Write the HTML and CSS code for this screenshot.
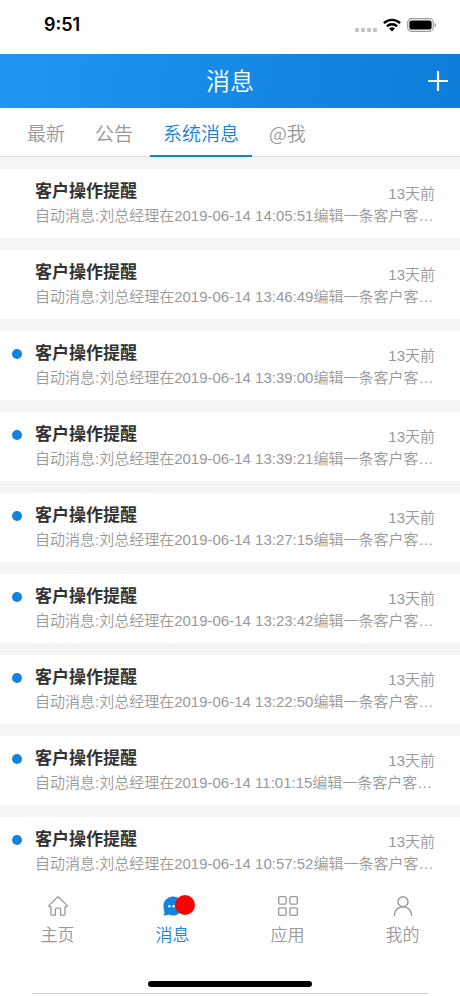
FILE: index.html
```html
<!DOCTYPE html>
<html lang="zh-CN">
<head>
  <meta charset="UTF-8" />
  <meta name="viewport" content="width=device-width, initial-scale=1" />
  <title>消息</title>
  <link rel="stylesheet" href="styles.css">
</head>
<body>

  <div class="status-bar">
    <span class="clock">9:51</span>
    <div class="status-icons">
      <svg width="22" height="16" viewBox="0 0 22 16" fill="#c4c4c4">
        <rect x="0" y="11" width="4" height="4" rx="1" />
        <rect x="6" y="11" width="4" height="4" rx="1" />
        <rect x="12" y="11" width="4" height="4" rx="1" />
        <rect x="18" y="11" width="4" height="4" rx="1" />
      </svg>
      <svg width="18" height="14" viewBox="0 0 18 14" fill="none" stroke="#000" stroke-width="2.4">
        <path d="M0.9 5.2C5.4 0.7 12.6 0.7 17.1 5.2" />
        <path d="M3.9 8.3C6.8 5.5 11.2 5.5 14.1 8.3" />
        <path d="M9 13.4L6 10.4C7.7 8.9 10.3 8.9 12 10.4Z" fill="#000" stroke="none" />
      </svg>
      <svg width="30" height="14" viewBox="0 0 30 14">
        <rect x="0.7" y="0.7" width="25.6" height="12.6" rx="3.8" fill="none" stroke="#9a9a9a" stroke-width="1.2" />
        <rect x="2.4" y="2.4" width="22.2" height="9.2" rx="2.2" fill="#000" />
        <path d="M27.8 4.8C29.6 5.6 29.6 8.4 27.8 9.2Z" fill="#8a8a8a" />
      </svg>
    </div>
  </div>

  <header class="header">
    <h1>消息</h1>
    <button class="add" aria-label="新建">
      <svg width="20" height="20" viewBox="0 0 20 20" stroke="#fff" stroke-width="2.2" stroke-linecap="round">
        <path d="M10 1V19M1 10H19" />
      </svg>
    </button>
  </header>

  <nav class="tabs">
    <a href="#">最新</a>
    <a href="#">公告</a>
    <a href="#" class="active">系统消息</a>
    <a href="#">@我</a>
  </nav>

  <main class="list">
    <article class="card">
      <h2>客户操作提醒</h2>
      <time>13天前</time>
      <p>自动消息:刘总经理在2019-06-14 14:05:51编辑一条客户客…</p>
    </article>
    <article class="card">
      <h2>客户操作提醒</h2>
      <time>13天前</time>
      <p>自动消息:刘总经理在2019-06-14 13:46:49编辑一条客户客…</p>
    </article>
    <article class="card unread">
      <h2>客户操作提醒</h2>
      <time>13天前</time>
      <p>自动消息:刘总经理在2019-06-14 13:39:00编辑一条客户客…</p>
    </article>
    <article class="card unread">
      <h2>客户操作提醒</h2>
      <time>13天前</time>
      <p>自动消息:刘总经理在2019-06-14 13:39:21编辑一条客户客…</p>
    </article>
    <article class="card unread">
      <h2>客户操作提醒</h2>
      <time>13天前</time>
      <p>自动消息:刘总经理在2019-06-14 13:27:15编辑一条客户客…</p>
    </article>
    <article class="card unread">
      <h2>客户操作提醒</h2>
      <time>13天前</time>
      <p>自动消息:刘总经理在2019-06-14 13:23:42编辑一条客户客…</p>
    </article>
    <article class="card unread">
      <h2>客户操作提醒</h2>
      <time>13天前</time>
      <p>自动消息:刘总经理在2019-06-14 13:22:50编辑一条客户客…</p>
    </article>
    <article class="card unread">
      <h2>客户操作提醒</h2>
      <time>13天前</time>
      <p>自动消息:刘总经理在2019-06-14 11:01:15编辑一条客户客…</p>
    </article>
    <article class="card unread">
      <h2>客户操作提醒</h2>
      <time>13天前</time>
      <p>自动消息:刘总经理在2019-06-14 10:57:52编辑一条客户客…</p>
    </article>
  </main>

  <footer class="bottom">
    <nav class="tabbar">
      <a href="#">
        <span class="icon">
          <svg width="20" height="20" viewBox="0 0 20 20" fill="none" stroke="#999" stroke-width="1.3" stroke-linejoin="round" stroke-linecap="round">
            <path d="M10 0.8L19.2 9.6C19.4 10.2 19 10.6 18.4 10.6H17V18C17 18.8 16.6 19.2 15.8 19.2H12.6V13.4C12.6 12.6 12.2 12.2 11.4 12.2H8.6C7.8 12.2 7.4 12.6 7.4 13.4V19.2H4.2C3.4 19.2 3 18.8 3 18V10.6H1.6C1 10.6 0.6 10.2 0.8 9.6Z" />
          </svg>
        </span>
        主页
      </a>
      <a href="#" class="active">
        <span class="icon">
          <svg width="20" height="20" viewBox="0 0 20 20">
            <path d="M10 0.4C15.4 0.4 19.6 4.7 19.6 10S15.4 19.6 10 19.6C8.4 19.6 7 19.2 5.6 18.6C4 19.4 2.2 19.6 0.5 19.3C1.2 18.3 1.4 17 1.3 15.4C0.7 13.8 0.4 12 0.4 10C0.4 4.7 4.6 0.4 10 0.4Z" fill="#1583dc" />
            <circle cx="6.4" cy="10.2" r="1.2" fill="#fff" />
            <circle cx="10.6" cy="10.2" r="1.2" fill="#fff" />
          </svg>
          <span class="badge"></span>
        </span>
        消息
      </a>
      <a href="#">
        <span class="icon">
          <svg width="20" height="20" viewBox="0 0 20 20" fill="none" stroke="#999" stroke-width="1.3">
            <rect x="0.7" y="0.7" width="7.4" height="7.4" rx="1" />
            <rect x="11.9" y="0.7" width="7.4" height="7.4" rx="1" />
            <rect x="0.7" y="11.9" width="7.4" height="7.4" rx="1" />
            <rect x="11.9" y="11.9" width="7.4" height="7.4" rx="1" />
          </svg>
        </span>
        应用
      </a>
      <a href="#">
        <span class="icon">
          <svg width="20" height="20" viewBox="0 0 20 20" fill="none" stroke="#999" stroke-width="1.4" stroke-linecap="round">
            <circle cx="10" cy="5.8" r="5" />
            <path d="M1.3 19.2C1.6 14.2 5.2 10.8 10 10.8S18.4 14.2 18.7 19.2" />
          </svg>
        </span>
        我的
      </a>
    </nav>
    <div class="home-indicator"></div>
    <div class="bottom-line"></div>
  </footer>

</body>
</html>
```

FILE: styles.css
```css
* {
  box-sizing: border-box;
}

body {
  margin: 0;
  height: 100vh;
  display: flex;
  flex-direction: column;
  overflow: hidden;
  background: #f5f5f5;
  color: #999;
  font-family: "Liberation Sans", "Noto Sans CJK SC", sans-serif;
  font-weight: 350;
}

h1, h2, p {
  margin: 0;
}

a {
  color: inherit;
  text-decoration: none;
}

svg {
  display: block;
}

/* Status bar */
.status-bar {
  flex: none;
  display: flex;
  justify-content: space-between;
  height: 54px;
  padding: 13px 23px 0 44px;
  background: #fff;
}

.clock {
  color: #000;
  font-family: Inter, sans-serif;
  font-size: 18px;
  font-weight: 600;
  line-height: 24px;
}

.status-icons {
  display: flex;
  align-items: center;
  gap: 6px;
  height: 24px;
}

/* Header */
.header {
  flex: none;
  display: grid;
  grid-template-columns: 1fr auto 1fr;
  align-items: center;
  height: 54px;
  padding: 0 12px;
  background: linear-gradient(100deg, #2196f3, #0d7dd9);
}

.header h1 {
  grid-column: 2;
  padding-top: 2px;
  color: #fff;
  font-size: 24px;
  font-weight: 350;
  line-height: 36px;
}

.add {
  justify-self: end;
  padding: 0;
  border: 0;
  background: none;
  cursor: pointer;
}

/* Tabs */
.tabs {
  flex: none;
  display: flex;
  gap: 4px;
  height: 49px;
  padding-left: 14px;
  background: #fff;
  border-bottom: 1px solid #ddd;
  font-family: "Noto Sans CJK SC", sans-serif;
  font-size: 19px;
  line-height: 50px;
}

.tabs a {
  height: 49px;
  padding: 0 13px;
}

.tabs .active {
  color: #1583dc;
  border-bottom: 2px solid #1583dc;
}

/* Message list */
.list {
  flex: 1;
  display: flex;
  flex-direction: column;
  gap: 12px;
  min-height: 0;
  padding-top: 12px;
  overflow: hidden;
}

.card {
  flex: none;
  display: grid;
  grid-template-columns: 10px 1fr auto;
  column-gap: 13px;
  align-items: center;
  padding: 10px 25px 11px 12px;
  background: #fff;
  font-size: 15px;
  line-height: 22px;
}

.card::before {
  content: "";
  width: 10px;
  height: 10px;
  border-radius: 50%;
}

.unread::before {
  background: #1583dc;
}

.card h2 {
  color: #333;
  font-size: 17px;
  font-weight: 700;
  line-height: 26px;
}

.card time {
  padding-top: 4px;
}

.card p {
  grid-column: 2 / 4;
  overflow: hidden;
  white-space: nowrap;
}

/* Bottom bar */
.bottom {
  flex: none;
  padding: 16px 0 2px;
  background: #fff;
}

.tabbar {
  display: grid;
  grid-template-columns: repeat(4, 1fr);
  font-size: 17px;
  line-height: 24px;
}

.tabbar a {
  display: flex;
  flex-direction: column;
  align-items: center;
  gap: 8px;
}

.tabbar .active {
  color: #1583dc;
}

.icon {
  position: relative;
}

.badge {
  position: absolute;
  top: -1px;
  right: -12px;
  width: 20px;
  height: 20px;
  border-radius: 50%;
  background: #f00;
}

.home-indicator {
  width: 164px;
  height: 6px;
  margin: 33px auto 6px;
  border-radius: 3px;
  background: #000;
}

.bottom-line {
  height: 1px;
  margin: 0 32px;
  background: #ccc;
}
```
